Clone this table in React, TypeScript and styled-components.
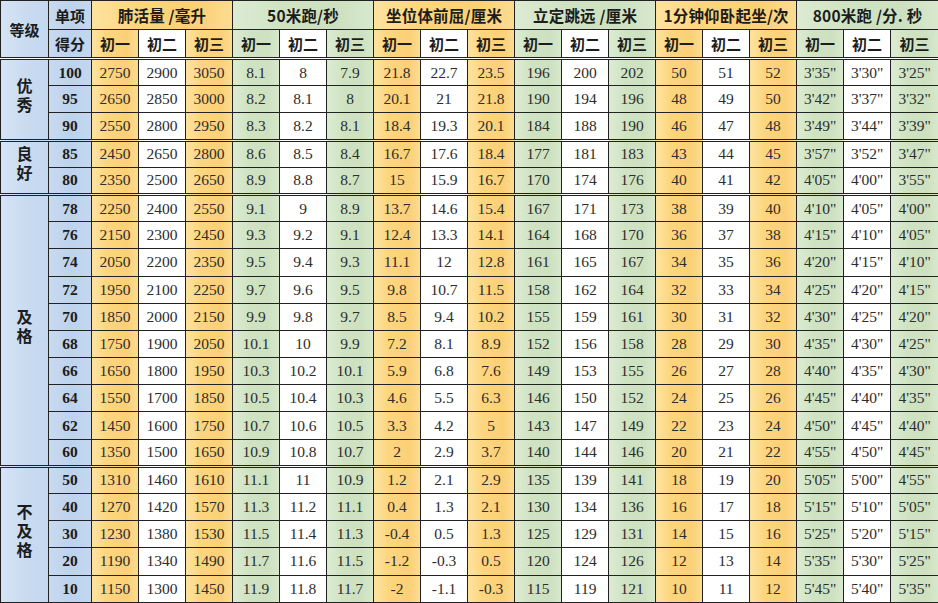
import React from 'react';
import styled, { createGlobalStyle, css } from 'styled-components';

type Tone = 'yellow' | 'green' | 'white' | 'blue' | 'deepBlue';

const GlobalStyle = createGlobalStyle`
  html, body {
    margin: 0;
    padding: 0;
    background: #ffffff;
  }
`;

const tones: Record<Tone, ReturnType<typeof css>> = {
  yellow: css`
    background: linear-gradient(90deg, #fde3a0 0%, #fcd67f 30%, #fbd077 75%, #fcdc92 100%);
  `,
  green: css`
    background: linear-gradient(90deg, #dcebd2 0%, #cfe3c2 35%, #cde1c0 75%, #d8e8cd 100%);
  `,
  white: css`
    background: #ffffff;
  `,
  blue: css`
    background: linear-gradient(90deg, #d5e4f5 0%, #c8daf0 60%, #c4d8ef 100%);
  `,
  deepBlue: css`
    background: linear-gradient(90deg, #c8daf0 0%, #bdd2ec 50%, #c3d7ef 100%);
  `,
};

const Sheet = styled.table`
  width: 938px;
  height: 603px;
  table-layout: fixed;
  border-collapse: collapse;
  border: 1px solid #444;
`;

const Row = styled.tr<{ $head?: boolean; $groupStart?: boolean }>`
  height: ${(p) => (p.$head ? '29px' : '27.2px')};
  ${(p) =>
    p.$groupStart &&
    css`
      & > td {
        border-top: 3px double #222;
      }
    `}
`;

const HeadCell = styled.td<{ $tone: Tone }>`
  ${(p) => tones[p.$tone]}
  border: 1px solid #222;
  padding: 0;
  text-align: center;
  vertical-align: middle;
  font-family: "Noto Sans CJK SC", "Liberation Serif", serif;
  font-weight: 700;
  font-size: 15px;
  color: #1c1c1c;
  white-space: nowrap;
  overflow: hidden;
`;

const GroupTitle = styled(HeadCell)`
  font-size: 15.5px;
  letter-spacing: 0.2px;
`;

const Cell = styled.td<{ $tone: Tone }>`
  ${(p) => tones[p.$tone]}
  border: 1px solid #222;
  padding: 0;
  text-align: center;
  vertical-align: middle;
  font-family: "Liberation Serif", "Times New Roman", serif;
  font-size: 15.5px;
  color: #2d2d2d;
  white-space: nowrap;
`;

const ScoreCell = styled(Cell)`
  font-weight: 700;
  color: #1c1c1c;
`;

const GradeCell = styled.td`
  ${tones.blue}
  border: 1px solid #222;
  padding: 0;
  text-align: center;
  vertical-align: middle;
`;

const GradeText = styled.span`
  display: inline-block;
  writing-mode: vertical-rl;
  text-orientation: upright;
  letter-spacing: 3px;
  font-family: "Noto Sans CJK SC", serif;
  font-weight: 700;
  font-size: 16px;
  line-height: 20px;
  color: #1c1c1c;
`;

const groups = [
  { title: '肺活量 /毫升', tone: 'yellow' as Tone },
  { title: '50米跑/秒', tone: 'green' as Tone },
  { title: '坐位体前屈/厘米', tone: 'yellow' as Tone },
  { title: '立定跳远 /厘米', tone: 'green' as Tone },
  { title: '1分钟仰卧起坐/次', tone: 'yellow' as Tone },
  { title: '800米跑 /分. 秒', tone: 'green' as Tone },
];

const grades = ['初一', '初二', '初三'];

const toneFor = (col: number): Tone => {
  const g = groups[Math.floor(col / 3)];
  return col % 3 === 1 ? 'white' : g.tone;
};

type Band = { label: string; rows: [string, string[]][] };

const bands: Band[] = [
  {
    label: '优秀',
    rows: [
      ['100', '2750 2900 3050 8.1 8 7.9 21.8 22.7 23.5 196 200 202 50 51 52 3\'35" 3\'30" 3\'25"'.split(' ')],
      ['95', '2650 2850 3000 8.2 8.1 8 20.1 21 21.8 190 194 196 48 49 50 3\'42" 3\'37" 3\'32"'.split(' ')],
      ['90', '2550 2800 2950 8.3 8.2 8.1 18.4 19.3 20.1 184 188 190 46 47 48 3\'49" 3\'44" 3\'39"'.split(' ')],
    ],
  },
  {
    label: '良好',
    rows: [
      ['85', '2450 2650 2800 8.6 8.5 8.4 16.7 17.6 18.4 177 181 183 43 44 45 3\'57" 3\'52" 3\'47"'.split(' ')],
      ['80', '2350 2500 2650 8.9 8.8 8.7 15 15.9 16.7 170 174 176 40 41 42 4\'05" 4\'00" 3\'55"'.split(' ')],
    ],
  },
  {
    label: '及格',
    rows: [
      ['78', '2250 2400 2550 9.1 9 8.9 13.7 14.6 15.4 167 171 173 38 39 40 4\'10" 4\'05" 4\'00"'.split(' ')],
      ['76', '2150 2300 2450 9.3 9.2 9.1 12.4 13.3 14.1 164 168 170 36 37 38 4\'15" 4\'10" 4\'05"'.split(' ')],
      ['74', '2050 2200 2350 9.5 9.4 9.3 11.1 12 12.8 161 165 167 34 35 36 4\'20" 4\'15" 4\'10"'.split(' ')],
      ['72', '1950 2100 2250 9.7 9.6 9.5 9.8 10.7 11.5 158 162 164 32 33 34 4\'25" 4\'20" 4\'15"'.split(' ')],
      ['70', '1850 2000 2150 9.9 9.8 9.7 8.5 9.4 10.2 155 159 161 30 31 32 4\'30" 4\'25" 4\'20"'.split(' ')],
      ['68', '1750 1900 2050 10.1 10 9.9 7.2 8.1 8.9 152 156 158 28 29 30 4\'35" 4\'30" 4\'25"'.split(' ')],
      ['66', '1650 1800 1950 10.3 10.2 10.1 5.9 6.8 7.6 149 153 155 26 27 28 4\'40" 4\'35" 4\'30"'.split(' ')],
      ['64', '1550 1700 1850 10.5 10.4 10.3 4.6 5.5 6.3 146 150 152 24 25 26 4\'45" 4\'40" 4\'35"'.split(' ')],
      ['62', '1450 1600 1750 10.7 10.6 10.5 3.3 4.2 5 143 147 149 22 23 24 4\'50" 4\'45" 4\'40"'.split(' ')],
      ['60', '1350 1500 1650 10.9 10.8 10.7 2 2.9 3.7 140 144 146 20 21 22 4\'55" 4\'50" 4\'45"'.split(' ')],
    ],
  },
  {
    label: '不及格',
    rows: [
      ['50', '1310 1460 1610 11.1 11 10.9 1.2 2.1 2.9 135 139 141 18 19 20 5\'05" 5\'00" 4\'55"'.split(' ')],
      ['40', '1270 1420 1570 11.3 11.2 11.1 0.4 1.3 2.1 130 134 136 16 17 18 5\'15" 5\'10" 5\'05"'.split(' ')],
      ['30', '1230 1380 1530 11.5 11.4 11.3 -0.4 0.5 1.3 125 129 131 14 15 16 5\'25" 5\'20" 5\'15"'.split(' ')],
      ['20', '1190 1340 1490 11.7 11.6 11.5 -1.2 -0.3 0.5 120 124 126 12 13 14 5\'35" 5\'30" 5\'25"'.split(' ')],
      ['10', '1150 1300 1450 11.9 11.8 11.7 -2 -1.1 -0.3 115 119 121 10 11 12 5\'45" 5\'40" 5\'35"'.split(' ')],
    ],
  },
];

const App: React.FC = () => {
  return (
    <>
      <GlobalStyle />
      <Sheet>
        <colgroup>
          <col style={{ width: 48 }} />
          <col style={{ width: 43 }} />
          {Array.from({ length: 18 }).map((_, i) => (
            <col key={i} style={{ width: i === 17 ? 48 : 47 }} />
          ))}
        </colgroup>
        <tbody>
          <Row $head>
            <HeadCell $tone="blue" rowSpan={2}>等级</HeadCell>
            <HeadCell $tone="deepBlue">单项</HeadCell>
            {groups.map((g) => (
              <GroupTitle key={g.title} $tone={g.tone} colSpan={3}>
                {g.title}
              </GroupTitle>
            ))}
          </Row>
          <Row $head>
            <HeadCell $tone="deepBlue">得分</HeadCell>
            {groups.flatMap((g, gi) =>
              grades.map((label, i) => (
                <HeadCell key={`${gi}-${i}`} $tone={toneFor(gi * 3 + i)}>
                  {label}
                </HeadCell>
              ))
            )}
          </Row>
          {bands.map((band) =>
            band.rows.map(([score, values], ri) => (
              <Row key={score} $groupStart={ri === 0}>
                {ri === 0 && (
                  <GradeCell rowSpan={band.rows.length}>
                    <GradeText>{band.label}</GradeText>
                  </GradeCell>
                )}
                <ScoreCell $tone="deepBlue">{score}</ScoreCell>
                {values.map((v, ci) => (
                  <Cell key={ci} $tone={toneFor(ci)}>
                    {v}
                  </Cell>
                ))}
              </Row>
            ))
          )}
        </tbody>
      </Sheet>
    </>
  );
};

export default App;
